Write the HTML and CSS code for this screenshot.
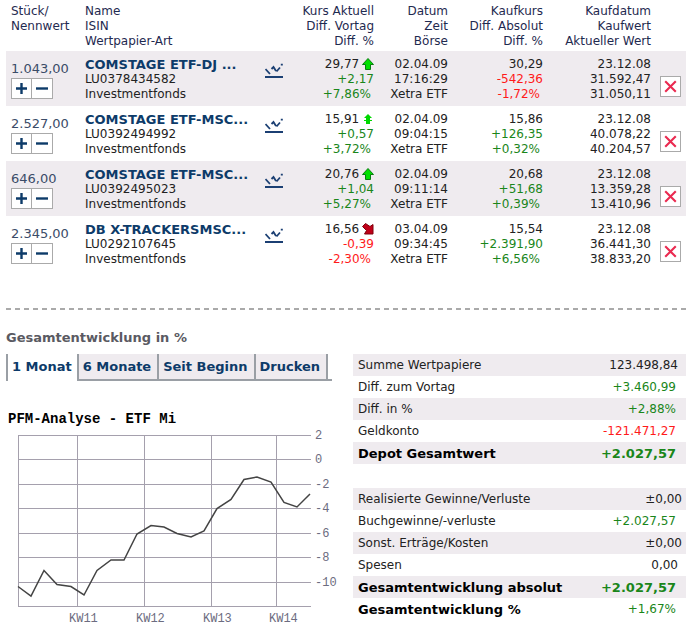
FILE: index.html
```html
<!DOCTYPE html>
<html lang="de">
<head>
    <meta charset="UTF-8">
    <meta name="viewport" content="width=device-width, initial-scale=1.0">
    <title>Depot</title>
    <link rel="stylesheet" href="styles.css">
</head>
<body>

<!-- Shared icons -->
<svg class="sprite" aria-hidden="true">
    <symbol id="icon-chart" viewBox="0 0 18 16">
        <path d="M0.500 6l4.500 5M6.500 6l2-2 2.500 4M11.500 8.500l3.500-4M15.800 1.700h2" fill="none" stroke="#1b3f73" stroke-width="1.800"/>
        <path d="M0 14h18" stroke="#1b3f73" stroke-width="2"/>
    </symbol>
    <symbol id="icon-plus" viewBox="0 0 19 19">
        <path d="M4 9.500h11M9.500 4v11" stroke="#0d3b69" stroke-width="2.400"/>
    </symbol>
    <symbol id="icon-minus" viewBox="0 0 19 19">
        <path d="M4 9.500h12" stroke="#0d3b69" stroke-width="2.400"/>
    </symbol>
    <symbol id="icon-delete" viewBox="0 0 18 18">
        <path d="M4 4l10 10M14 4L4 14" stroke="#ea2a50" stroke-width="2"/>
    </symbol>
    <symbol id="icon-up" viewBox="0 0 12 12">
        <path d="M6 0.500L11.500 6.500H8.500V11.500H3.500V6.500H0.500z" fill="#00e000" stroke="#087a10"/>
    </symbol>
    <symbol id="icon-up-small" viewBox="0 0 12 12">
        <path d="M6 1L10 5H8V7H10V8H8V11H4V8H2V7H4V5H2z" fill="#00d800"/>
    </symbol>
    <symbol id="icon-down" viewBox="0 0 12 12">
        <path d="M0.500 3.500L3.500 0.500L8 3.500L11 1.500V11H2.500L4.500 7.500z" fill="#c00018" stroke="#80000c"/>
    </symbol>
</svg>

<table class="positions">
    <thead>
        <tr>
            <th class="col-amount">Stück/<br>Nennwert</th>
            <th>Name<br>ISIN<br>Wertpapier-Art</th>
            <th class="col-icon"></th>
            <th class="col-price num">Kurs Aktuell<br>Diff. Vortag<br>Diff. %</th>
            <th class="col-date num">Datum<br>Zeit<br>Börse</th>
            <th class="col-buy num">Kaufkurs<br>Diff. Absolut<br>Diff. %</th>
            <th class="col-value num">Kaufdatum<br>Kaufwert<br>Aktueller Wert</th>
            <th class="col-delete"></th>
        </tr>
    </thead>
    <tbody>
        <tr>
            <td class="amount">1.043,00
                <div class="trade"><button aria-label="Kaufen"><svg><use href="#icon-plus"/></svg></button><button aria-label="Verkaufen"><svg><use href="#icon-minus"/></svg></button></div>
            </td>
            <td><a class="name" href="#">COMSTAGE ETF-DJ ...</a><br>LU0378434582<br>Investmentfonds</td>
            <td><a href="#" aria-label="Chart"><svg class="spark"><use href="#icon-chart"/></svg></a></td>
            <td class="num">29,77 <svg class="trend"><use href="#icon-up"/></svg><br><span class="plus">+2,17</span><br><span class="plus pct">+7,86%</span></td>
            <td class="num">02.04.09<br>17:16:29<br>Xetra ETF</td>
            <td class="num">30,29<br><span class="minus">-542,36</span><br><span class="minus pct">-1,72%</span></td>
            <td class="num">23.12.08<br>31.592,47<br>31.050,11</td>
            <td class="remove"><button aria-label="Löschen"><svg><use href="#icon-delete"/></svg></button></td>
        </tr>
        <tr>
            <td class="amount">2.527,00
                <div class="trade"><button aria-label="Kaufen"><svg><use href="#icon-plus"/></svg></button><button aria-label="Verkaufen"><svg><use href="#icon-minus"/></svg></button></div>
            </td>
            <td><a class="name" href="#">COMSTAGE ETF-MSC...</a><br>LU0392494992<br>Investmentfonds</td>
            <td><a href="#" aria-label="Chart"><svg class="spark"><use href="#icon-chart"/></svg></a></td>
            <td class="num">15,91 <svg class="trend"><use href="#icon-up-small"/></svg><br><span class="plus">+0,57</span><br><span class="plus pct">+3,72%</span></td>
            <td class="num">02.04.09<br>09:04:15<br>Xetra ETF</td>
            <td class="num">15,86<br><span class="plus">+126,35</span><br><span class="plus pct">+0,32%</span></td>
            <td class="num">23.12.08<br>40.078,22<br>40.204,57</td>
            <td class="remove"><button aria-label="Löschen"><svg><use href="#icon-delete"/></svg></button></td>
        </tr>
        <tr>
            <td class="amount">646,00
                <div class="trade"><button aria-label="Kaufen"><svg><use href="#icon-plus"/></svg></button><button aria-label="Verkaufen"><svg><use href="#icon-minus"/></svg></button></div>
            </td>
            <td><a class="name" href="#">COMSTAGE ETF-MSC...</a><br>LU0392495023<br>Investmentfonds</td>
            <td><a href="#" aria-label="Chart"><svg class="spark"><use href="#icon-chart"/></svg></a></td>
            <td class="num">20,76 <svg class="trend"><use href="#icon-up"/></svg><br><span class="plus">+1,04</span><br><span class="plus pct">+5,27%</span></td>
            <td class="num">02.04.09<br>09:11:14<br>Xetra ETF</td>
            <td class="num">20,68<br><span class="plus">+51,68</span><br><span class="plus pct">+0,39%</span></td>
            <td class="num">23.12.08<br>13.359,28<br>13.410,96</td>
            <td class="remove"><button aria-label="Löschen"><svg><use href="#icon-delete"/></svg></button></td>
        </tr>
        <tr>
            <td class="amount">2.345,00
                <div class="trade"><button aria-label="Kaufen"><svg><use href="#icon-plus"/></svg></button><button aria-label="Verkaufen"><svg><use href="#icon-minus"/></svg></button></div>
            </td>
            <td><a class="name" href="#">DB X-TRACKERSMSC...</a><br>LU0292107645<br>Investmentfonds</td>
            <td><a href="#" aria-label="Chart"><svg class="spark"><use href="#icon-chart"/></svg></a></td>
            <td class="num">16,56 <svg class="trend"><use href="#icon-down"/></svg><br><span class="minus">-0,39</span><br><span class="minus pct">-2,30%</span></td>
            <td class="num">03.04.09<br>09:34:45<br>Xetra ETF</td>
            <td class="num">15,54<br><span class="plus">+2.391,90</span><br><span class="plus pct">+6,56%</span></td>
            <td class="num">23.12.08<br>36.441,30<br>38.833,20</td>
            <td class="remove"><button aria-label="Löschen"><svg><use href="#icon-delete"/></svg></button></td>
        </tr>
    </tbody>
</table>

<hr class="divider">

<h2>Gesamtentwicklung in %</h2>

<div class="overview">
    <div class="development">
        <div class="tabs">
            <button class="tab active">1 Monat</button>
            <button class="tab">6 Monate</button>
            <button class="tab">Seit Beginn</button>
            <button class="tab">Drucken</button>
        </div>
        <h3>PFM-Analyse - ETF Mi</h3>
        <svg class="chart" viewBox="0 0 347 199">
            <!-- Grid -->
            <path class="grid" d="M12 7.500h293M12 31.500h293M12 56.500h293M12 80.500h293M12 105.500h293M12 129.500h293M12 154.500h293M12 178.500h293"/>
            <path class="grid" d="M12.500 7v172M71.500 7v172M138.500 7v172M205.500 7v172M270.500 7v172"/>
            <polyline class="curve" points="12,158.500 25,168 38,142.500 51,156.500 65,158.500 78,167 91,142.500 105,132 118,132 131,106 145,97.500 158,99 171,105.500 185,109 198,103 211,80.500 225,71.500 238,51.500 251,49 265,54 278,74.500 291,79 304,66"/>
            <text x="309" y="11">2</text>
            <text x="309" y="35">0</text>
            <text x="309" y="60">-2</text>
            <text x="309" y="84">-4</text>
            <text x="309" y="109">-6</text>
            <text x="309" y="133">-8</text>
            <text x="309" y="158">-10</text>
            <text x="63" y="194">KW11</text>
            <text x="130" y="194">KW12</text>
            <text x="197" y="194">KW13</text>
            <text x="263" y="194">KW14</text>
        </svg>
    </div>

    <div class="totals">
        <table class="summary">
            <tr><th>Summe Wertpapiere</th><td>123.498,84</td></tr>
            <tr><th>Diff. zum Vortag</th><td class="plus">+3.460,99</td></tr>
            <tr><th>Diff. in %</th><td class="plus">+2,88%</td></tr>
            <tr><th>Geldkonto</th><td class="minus">-121.471,27</td></tr>
            <tr class="sum"><th>Depot Gesamtwert</th><td class="plus">+2.027,57</td></tr>
        </table>
        <table class="summary">
            <tr><th>Realisierte Gewinne/Verluste</th><td class="zero">±0,00</td></tr>
            <tr><th>Buchgewinne/-verluste</th><td class="plus">+2.027,57</td></tr>
            <tr><th>Sonst. Erträge/Kosten</th><td class="zero">±0,00</td></tr>
            <tr><th>Spesen</th><td>0,00</td></tr>
            <tr class="sum"><th>Gesamtentwicklung absolut</th><td class="plus">+2.027,57</td></tr>
            <tr><th class="strong">Gesamtentwicklung %</th><td class="plus">+1,67%</td></tr>
        </table>
    </div>
</div>

</body>
</html>
```

FILE: styles.css
```css
body {
    font-family: "DejaVu Sans", Verdana, sans-serif;
    font-size: 12px;
    line-height: 15px;
    margin: 0;
    padding: 4px 1px 0 6px;
    background-color: #fff;
    color: #222;
}
table {
    width: 100%;
    border-collapse: collapse;
}
th, td {
    text-align: left;
    font-weight: normal;
    padding: 0 2px;
}
button {
    font: inherit;
    margin: 0;
    padding: 0;
    cursor: pointer;
}
.sprite {
    display: none;
}

/* Positions */
.positions {
    table-layout: fixed;
}
.positions th, .positions td {
    vertical-align: top;
    white-space: nowrap;
}
.positions th {
    color: #1f2a50;
    padding-bottom: 2px;
}
.positions td {
    height: 45px;
    padding-top: 6px;
    padding-bottom: 4px;
}
.positions tbody tr:nth-child(odd), .summary tr:nth-child(odd) {
    background-color: #efebef;
}
.positions .col-amount, .positions .amount {
    width: 70px;
    padding-left: 5px;
}
.col-icon {
    width: 21px;
}
.col-price {
    width: 85px;
}
.col-date {
    width: 70px;
}
.col-buy {
    width: 91px;
}
.col-value {
    width: 104px;
}
.col-delete {
    width: 29px;
}
.positions .num {
    text-align: right;
}
.positions .amount {
    font-size: 13px;
    color: #3b4c68;
    padding-top: 10px;
    padding-bottom: 0;
}
.name {
    color: #0d3b69;
    font-size: 13px;
    font-weight: bold;
    text-decoration: none;
    vertical-align: top;
}
.plus {
    color: #1a861a;
}
.minus {
    color: #ff1a1a;
}
.pct {
    padding-right: 3px;
}
.trade {
    display: flex;
    margin-top: 2px;
}
.trade button, .remove button {
    box-sizing: border-box;
    width: 21px;
    height: 21px;
    background-color: #fff;
    border: 1px solid #aaa;
}
.trade button + button {
    border-left: 0;
}
.trade svg, .remove svg {
    display: block;
    width: 19px;
    height: 19px;
}
.spark {
    display: block;
    width: 18px;
    height: 16px;
    margin-top: 6px;
    margin-left: 1px;
}
.trend {
    width: 12px;
    height: 12px;
    vertical-align: -2px;
    margin-left: -1px;
}
.positions .remove {
    padding-top: 25px;
    padding-left: 7px;
    padding-bottom: 0;
    height: 30px;
}

.divider {
    height: 2px;
    margin: 37px 0 20px;
    border: 0;
    background: repeating-linear-gradient(90deg, #aaa 0 5px, transparent 5px 9px);
}
h2 {
    margin: 0 0 9px;
    font-size: 13px;
    color: #5a5a62;
}

/* Chart and totals */
.overview {
    display: grid;
    grid-template-columns: 347fr 333fr;
}
.tabs {
    display: flex;
    height: 27px;
}
.tabs::after {
    content: "";
    width: 4px;
    border-left: 2px solid #9a9fa5;
    border-bottom: 2px solid #9a9fa5;
}
.tab {
    padding: 0 6px 0 4px;
    border: 0;
    border-left: 2px solid #9a9fa5;
    border-bottom: 2px solid #9a9fa5;
    background-color: #efebef;
    color: #0d3b69;
    font-size: 13px;
    font-weight: bold;
}
.tab.active {
    padding-right: 5px;
    padding-bottom: 2px;
    background-color: #fff;
    border-bottom: 0;
}
h3 {
    margin: 30px 0 1px 2px;
    font-family: "Liberation Mono", monospace;
    font-size: 14px;
    line-height: 16px;
    color: #000;
}
.chart {
    display: block;
    width: 100%;
    overflow: visible;
}
.chart text {
    font-family: "Liberation Mono", monospace;
    font-size: 12px;
    fill: #6c6c80;
}
.grid {
    fill: none;
    stroke: #a5a0ad;
}
.curve {
    fill: none;
    stroke: #444;
    stroke-width: 1.5;
}
.summary {
    margin-bottom: 24px;
}
.summary:last-child {
    margin-bottom: 0;
}
.summary th, .summary td {
    height: 21px;
    padding: 1px 5px 0;
}
.summary td {
    text-align: right;
    padding-right: 8px;
}
.summary .plus, .summary .minus {
    padding-right: 10px;
}
.summary .zero {
    padding-right: 4px;
}
.summary .sum th, .summary .sum td, .summary .strong {
    font-size: 13px;
    font-weight: bold;
}
.summary .sum th, .summary .strong {
    color: #000;
}
```
